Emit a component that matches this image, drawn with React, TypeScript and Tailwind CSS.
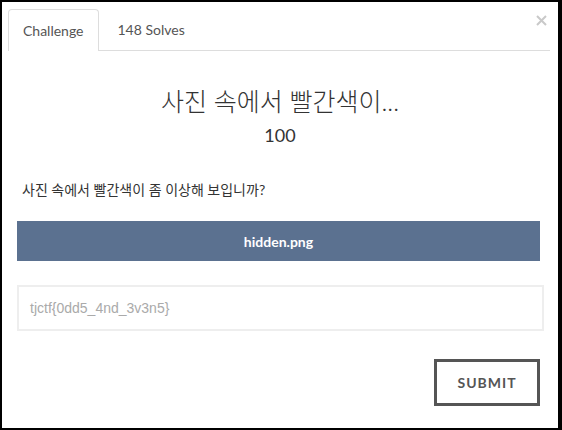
export default function App() {
  return (
    <div className="w-[562px] h-[430px] bg-black pt-[2px] pl-[2px]">
      <div
        className="relative w-[556px] h-[426px] bg-white pt-[7px]"
        style={{ fontFamily: "Lato, 'Noto Sans CJK KR', sans-serif" }}
      >
        {/* tabs */}
        <div className="ml-[6px] mr-[8px] flex border-b border-[#dddddd] h-[42px]">
          <div className="h-[42px] px-[14px] border border-b-0 border-[#dddddd] rounded-t-[4px] bg-white flex items-center text-[14px] text-[#555555] leading-none">
            Challenge
          </div>
          <div className="ml-[3px] h-[41px] px-[16px] flex items-center text-[14px] text-[#555555] leading-none">
            148 Solves
          </div>
        </div>
        <button className="absolute left-[532px] top-[11px] w-[15px] h-[15px] flex items-center justify-center">
          <svg width="11" height="11" viewBox="0 0 11 11">
            <path d="M1 1 L10 10 M10 1 L1 10" stroke="#c9c9c9" strokeWidth="2" />
          </svg>
        </button>

        {/* challenge header */}
        <h2 className="mt-[35px] h-[30px] leading-[30px] text-center text-[25px] font-light text-[#333333]">
          사진 속에서 빨간색이...
        </h2>
        <div className="mt-[8px] h-[22px] leading-[22px] text-center text-[18px] text-[#333333]">
          100
        </div>
        <p className="mt-[34px] ml-[20px] h-[20px] leading-[20px] text-[14px] text-[#333333]">
          사진 속에서 빨간색이 좀 이상해 보입니까?
        </p>

        {/* file */}
        <div className="mt-[21px] ml-[15px] w-[523px] h-[40px] bg-[#5b7190] flex items-center justify-center text-[14px] font-bold text-white">
          hidden.png
        </div>

        {/* flag input */}
        <div className="mt-[24px] ml-[15px] w-[527px] h-[46px] border-2 border-[#eeeeee] flex items-center px-[11px]">
          <span
            className="text-[14px] text-[#aaaaaa]"
            style={{ fontFamily: "'Liberation Sans', Arial, sans-serif" }}
          >
            tjctf{"{"}0dd5_4nd_3v3n5{"}"}
          </span>
        </div>

        <div className="flex justify-end w-[538px] mt-[28px]">
          <button className="w-[106px] h-[47px] border-[3px] border-[#555555] text-[14px] font-bold tracking-[1px] text-[#555555]">
            SUBMIT
          </button>
        </div>
      </div>
    </div>
  );
}
